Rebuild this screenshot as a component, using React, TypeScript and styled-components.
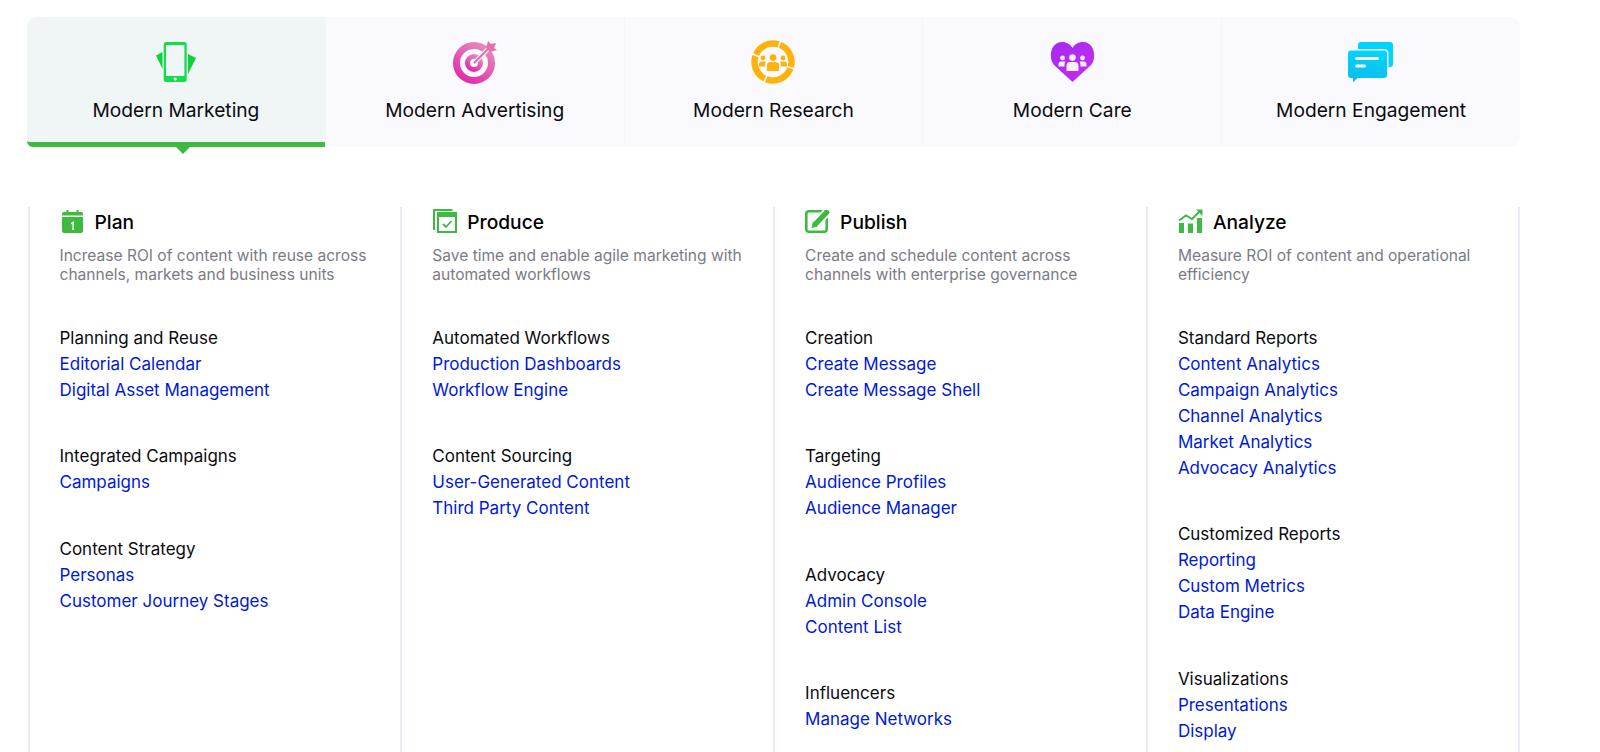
import React from "react";
import styled, { createGlobalStyle } from "styled-components";

const GlobalStyle = createGlobalStyle`
  html, body {
    margin: 0;
    padding: 0;
    height: 100%;
    overflow: hidden;
    background: #ffffff;
  }
  body {
    font-family: Inter, "Noto Sans", "Liberation Sans", sans-serif;
    -webkit-font-smoothing: antialiased;
  }
`;

const Page = styled.div`
  display: flex;
  flex-direction: column;
  height: 752px;
  padding: 17px 0 0 27px;
  box-sizing: border-box;
`;
const TabBar = styled.div`
  display: flex;
  width: 1493px;
  height: 130px;
  background: #f9f9fe;
  border-radius: 10px;
`;
const Tab = styled.div<{ $active?: boolean }>`
  position: relative;
  flex: 1 1 0;
  display: flex;
  flex-direction: column;
  align-items: center;
  padding-top: 23px;
  box-sizing: border-box;
  background: ${p => (p.$active ? "#f0f5f5" : "transparent")};
  border-bottom: ${p => (p.$active ? "5px solid #3dba3f" : "none")};
  border-left: ${p => (p.$active ? "none" : "1px solid #f4f4fa")};
  border-radius: ${p => (p.$active ? "10px 0 0 6px" : "0")};
  ${p =>
    p.$active &&
    `&::after {
      content: "";
      position: absolute;
      left: 149px;
      bottom: -12px;
      border-left: 7px solid transparent;
      border-right: 7px solid transparent;
      border-top: 7px solid #3dba3f;
    }`}
  &:first-child {
    border-left: none;
  }
`;
const TabLabel = styled.div`
  margin-top: 12px;
  font-size: 19.2px;
  line-height: 24px;
  color: #0b0b0f;
`;
const Columns = styled.div`
  flex: 1;
  display: flex;
  margin: 60px 0 0 0.5px;
  min-height: 0;
`;
const Column = styled.div`
  flex: 0 0 372.8px;
  box-sizing: border-box;
  padding: 2px 20px 0 30px;
  border-left: 2px solid #e9e9f8;
  &:last-child {
    flex-basis: 374.5px;
    border-right: 2px solid #e9e9f8;
  }
`;
const ColumnHead = styled.div`
  display: flex;
  align-items: center;
  gap: 10px;
  height: 24px;
`;
const ColumnTitle = styled.div`
  position: relative;
  top: 0.5px;
  font-size: 19.2px;
  font-weight: 500;
  color: #000000;
`;
const Description = styled.div`
  margin-top: 14px;
  font-size: 15.55px;
  line-height: 18.5px;
  color: #7b7b85;
`;
const GroupList = styled.div`
  margin-top: 41px;
  display: flex;
  flex-direction: column;
  gap: 40.3px;
`;
const Group = styled.div`
  display: flex;
  flex-direction: column;
`;
const GroupTitle = styled.div`
  font-size: 17px;
  line-height: 26px;
  color: #0b0b0f;
`;
const GroupLink = styled.a`
  font-size: 17px;
  line-height: 26px;
  color: #0019d6;
  text-decoration: none;
`;
const TabIcon = styled.svg`
  display: block;
  width: 46px;
  height: 46px;
  flex: none;
`;
const HeadIcon = styled.svg`
  display: block;
  width: 25px;
  height: 24px;
  flex: none;
`;

const PhoneIcon = () => (
  <TabIcon viewBox="0 0 46 46">
    <path d="M9.5 12 L3 15.5 L9.5 29 Z" fill="#10d13c" />
    <path d="M35 14 L43 18 L35 34 Z" fill="#10d13c" />
    <rect x="10.7" y="2" width="23" height="40" rx="2.5" fill="#14dd4b" />
    <rect x="13" y="5" width="18.4" height="31" fill="#f0f5f5" />
    <circle cx="22.2" cy="39" r="1.6" fill="#f0f5f5" />
  </TabIcon>
);

const TargetIcon = () => (
  <TabIcon viewBox="0 0 46 46">
    <defs>
      <linearGradient id="targetFill" x1="0.8" y1="0" x2="0.2" y2="1">
        <stop offset="0" stopColor="#e58ab8" />
        <stop offset="1" stopColor="#e22cab" />
      </linearGradient>
    </defs>
    <circle cx="22" cy="23" r="17.5" fill="none" stroke="url(#targetFill)" strokeWidth="7" />
    <circle cx="22" cy="23" r="6.5" fill="none" stroke="url(#targetFill)" strokeWidth="5" />
    <path d="M22 23 L38 7" stroke="#f9f9fe" strokeWidth="4.5" />
    <path d="M22 23 L38 7" stroke="#e668ae" strokeWidth="2" />
    <path d="M34 8 L36 1 L39 4 L44 3 L42 8 L45 10 L38 12 Z" fill="#e66fae" />
  </TabIcon>
);

const PeopleGroup = ({ fill }: { fill: string }) => (
  <g fill={fill}>
    <circle cx="23" cy="17.6" r="3.3" />
    <path d="M17 31 V26 Q17 22 20.5 22 H25.5 Q29 22 29 26 V31 Z" />
    <circle cx="13" cy="18" r="2.4" />
    <path d="M9 26.5 V24.5 Q9 21.5 12 21.5 H15.8 Q15 23 15 26.5 Z" />
    <circle cx="33" cy="18" r="2.4" />
    <path d="M37 26.5 V24.5 Q37 21.5 34 21.5 H30.2 Q31 23 31 26.5 Z" />
  </g>
);

const ResearchIcon = () => (
  <TabIcon viewBox="0 0 46 46">
    <g fill="none" stroke="#ffb20a" strokeWidth="6.4">
      <path d="M30.08 4.91 A18.5 18.5 0 0 1 40.83 26.94" />
      <path d="M40.33 28.48 A18.5 18.5 0 0 1 16.22 39.21" />
      <path d="M14.75 38.56 A18.5 18.5 0 0 1 5.46 16.13" />
      <path d="M6.03 14.62 A18.5 18.5 0 0 1 28.56 4.36" />
    </g>
    <PeopleGroup fill="#ffb20a" />
  </TabIcon>
);

const HeartIcon = () => (
  <TabIcon viewBox="0 0 46 46">
    <defs>
      <linearGradient id="heartFill" x1="0" y1="0" x2="1" y2="1">
        <stop offset="0" stopColor="#a32bf0" />
        <stop offset="1" stopColor="#c92bf2" />
      </linearGradient>
    </defs>
    <path
      d="M23.5 42 L5 25 C-1 18 1.5 2 13 2 C18 2 21.5 4.5 23.5 8 C25.5 4.5 29 2 34 2 C45.5 2 48 18 42 25 Z"
      fill="url(#heartFill)"
    />
    <g transform="translate(0.5 0)">
      <PeopleGroup fill="#f9f0ff" />
    </g>
  </TabIcon>
);

const ChatIcon = () => (
  <TabIcon viewBox="0 0 46 46">
    <defs>
      <linearGradient id="chatFill" x1="0.6" y1="0" x2="0.4" y2="1">
        <stop offset="0" stopColor="#02d5fb" />
        <stop offset="1" stopColor="#0cbdea" />
      </linearGradient>
    </defs>
    <rect x="10" y="2" width="35" height="25" rx="3" fill="#02d3fc" />
    <path
      d="M3 9 H35 Q40.5 9 40.5 13 V34 Q40.5 39 36 39 H10 L6 43 V39 H3 Q-1 39 -1 35 V13 Q-1 9 3 9 Z"
      fill="#f9f9fe"
    />
    <path
      d="M3 10.5 H36 Q39 10.5 39 13.5 V35 Q39 38 36 38 H9.5 L5 42.5 V38 H3 Q0 38 0 35 V13.5 Q0 10.5 3 10.5 Z"
      fill="url(#chatFill)"
    />
    <rect x="7" y="17" width="24" height="3" rx="1.5" fill="#f9f9fe" />
    <rect x="7" y="24.5" width="11" height="3" rx="1.5" fill="#f9f9fe" />
  </TabIcon>
);

const CalendarIcon = () => (
  <HeadIcon viewBox="0 0 25 24">
    <path d="M4 3 H6.5 V1 H8.5 V3 H16.5 V1 H18.5 V3 H21 Q23 3 23 5 V6.5 H2 V5 Q2 3 4 3 Z" fill="#3dba3f" />
    <path d="M2 8 H23 V22 Q23 24 21 24 H4 Q2 24 2 22 Z" fill="#3dba3f" />
    <path d="M11 14 L13 12.6 H14 V21 H12.4 V14.6 L11 15.5 Z" fill="#ffffff" />
  </HeadIcon>
);

const ProduceIcon = () => (
  <HeadIcon viewBox="0 0 25 24">
    <path d="M20.5 1 H2 V21" fill="none" stroke="#3dba3f" strokeWidth="2" />
    <rect x="6" y="4" width="18" height="19" fill="none" stroke="#3dba3f" strokeWidth="2" />
    <rect x="6" y="4" width="18" height="4" fill="#3dba3f" />
    <path d="M11 15 L14 18 L19.5 12" fill="none" stroke="#3dba3f" strokeWidth="1.8" />
  </HeadIcon>
);

const PublishIcon = () => (
  <HeadIcon viewBox="0 0 25 24">
    <rect x="1.3" y="2.3" width="20.4" height="20.4" rx="2.5" fill="none" stroke="#3dba3f" strokeWidth="2.6" />
    <path d="M21.5 3.5 L10 15.5" stroke="#ffffff" strokeWidth="9" />
    <path d="M21.5 3.5 L11 14.5" stroke="#3dba3f" strokeWidth="5.4" strokeLinecap="round" />
    <path d="M6.5 19 L8 12.5 L13 17.5 Z" fill="#3dba3f" />
  </HeadIcon>
);

const AnalyzeIcon = () => (
  <HeadIcon viewBox="0 0 25 24">
    <path d="M1 11.5 L8 6.5 L14 10 L21 3" fill="none" stroke="#3dba3f" strokeWidth="2" />
    <path d="M18 0.5 H24.5 V7 Z" fill="#3dba3f" />
    <rect x="1" y="14" width="5" height="10" fill="#3dba3f" />
    <rect x="10" y="14.5" width="5" height="9.5" fill="#3dba3f" />
    <rect x="19" y="9" width="5" height="15" fill="#3dba3f" />
  </HeadIcon>
);

const tabs = [
  { label: "Modern Marketing", icon: <PhoneIcon />, active: true },
  { label: "Modern Advertising", icon: <TargetIcon /> },
  { label: "Modern Research", icon: <ResearchIcon /> },
  { label: "Modern Care", icon: <HeartIcon /> },
  { label: "Modern Engagement", icon: <ChatIcon /> },
];

const columns = [
  {
    title: "Plan",
    icon: <CalendarIcon />,
    description: ["Increase ROI of content with reuse across", "channels, markets and business units"],
    groups: [
      { title: "Planning and Reuse", links: ["Editorial Calendar", "Digital Asset Management"] },
      { title: "Integrated Campaigns", links: ["Campaigns"] },
      { title: "Content Strategy", links: ["Personas", "Customer Journey Stages"] },
    ],
  },
  {
    title: "Produce",
    icon: <ProduceIcon />,
    description: ["Save time and enable agile marketing with", "automated workflows"],
    groups: [
      { title: "Automated Workflows", links: ["Production Dashboards", "Workflow Engine"] },
      { title: "Content Sourcing", links: ["User-Generated Content", "Third Party Content"] },
    ],
  },
  {
    title: "Publish",
    icon: <PublishIcon />,
    description: ["Create and schedule content across", "channels with enterprise governance"],
    groups: [
      { title: "Creation", links: ["Create Message", "Create Message Shell"] },
      { title: "Targeting", links: ["Audience Profiles", "Audience Manager"] },
      { title: "Advocacy", links: ["Admin Console", "Content List"] },
      { title: "Influencers", links: ["Manage Networks"] },
    ],
  },
  {
    title: "Analyze",
    icon: <AnalyzeIcon />,
    description: ["Measure ROI of content and operational", "efficiency"],
    groups: [
      {
        title: "Standard Reports",
        links: [
          "Content Analytics",
          "Campaign Analytics",
          "Channel Analytics",
          "Market Analytics",
          "Advocacy Analytics",
        ],
      },
      { title: "Customized Reports", links: ["Reporting", "Custom Metrics", "Data Engine"] },
      { title: "Visualizations", links: ["Presentations", "Display"] },
    ],
  },
];

const App: React.FC = () => (
  <Page>
    <GlobalStyle />
    <TabBar>
      {tabs.map(tab => (
        <Tab key={tab.label} $active={tab.active}>
          {tab.icon}
          <TabLabel>{tab.label}</TabLabel>
        </Tab>
      ))}
    </TabBar>
    <Columns>
      {columns.map(column => (
        <Column key={column.title}>
          <ColumnHead>
            {column.icon}
            <ColumnTitle>{column.title}</ColumnTitle>
          </ColumnHead>
          <Description>
            {column.description.map(line => (
              <div key={line}>{line}</div>
            ))}
          </Description>
          <GroupList>
            {column.groups.map(group => (
              <Group key={group.title}>
                <GroupTitle>{group.title}</GroupTitle>
                {group.links.map(link => (
                  <GroupLink key={link}>{link}</GroupLink>
                ))}
              </Group>
            ))}
          </GroupList>
        </Column>
      ))}
    </Columns>
  </Page>
);

export default App;
